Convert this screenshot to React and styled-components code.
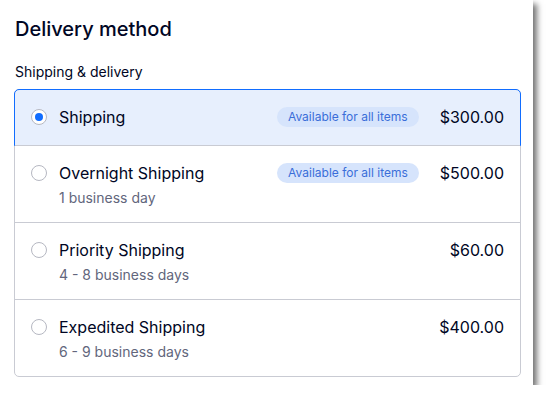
import React from 'react';
import styled, { createGlobalStyle } from 'styled-components';

const Global = createGlobalStyle`
body{
  margin:0;
  background:#fff;
  font-family:'Inter','Noto Sans',sans-serif;
}
`;

const Card = styled.div`
width:533px;
height:385px;
box-sizing:border-box;
background:#fff;
padding:17px 12px 0 14px;
box-shadow:4px 4px 6px rgba(0,0,0,0.55);
`;

const Title = styled.h1`
margin:0 0 0 1px;
font-size:20px;
font-weight:500;
line-height:24px;
color:#000624;
`;

const Label = styled.div`
margin:22px 0 8px 1px;
font-size:14px;
line-height:18px;
color:#000624;
`;

const List = styled.div`
border:1px solid #c9cbd3;
border-radius:5px;
`;

const Row = styled.div`
position:relative;
display:flex;
align-items:flex-start;
padding:16px 16px ${p => (p.$single ? '17px' : '14px')};
gap:12px;
background:${p => (p.$selected ? '#e7effd' : 'transparent')};
border-top:${p => (p.$first ? 'none' : '1px solid #c9cbd3')};
border-radius:${p => (p.$selected ? '4px 4px 0 0' : '0')};
min-height:${p => (p.$single ? '22px' : '44px')};
&::after{
  content:'';
  display:${p => (p.$selected ? 'block' : 'none')};
  position:absolute;
  inset:-1px -1px -1px -1px;
  border:1px solid #116dff;
  border-radius:5px 5px 0 0;
  pointer-events:none;
}
`;

const Radio = styled.span`
flex:none;
width:16px;
height:16px;
box-sizing:border-box;
margin-top:3px;
border-radius:50%;
border:1px solid #b6b8c2;
background:#fff;
display:flex;
align-items:center;
justify-content:center;
&::after{
  content:'';
  width:8px;
  height:8px;
  border-radius:50%;
  background:${p => (p.$checked ? '#116dff' : 'transparent')};
}
`;

const Info = styled.div`
flex:1;
display:flex;
flex-direction:column;
gap:4px;
`;

const Name = styled.div`
font-size:16px;
line-height:22px;
color:#000624;
`;

const Sub = styled.div`
font-size:14px;
line-height:20px;
color:#62667c;
`;

const Right = styled.div`
display:flex;
align-items:center;
gap:21px;
height:22px;
`;

const Badge = styled.span`
background:#d6e4fc;
color:#3a6ed9;
font-size:12px;
line-height:20px;
padding:0 11px;
border-radius:10px;
`;

const Price = styled.span`
font-size:16px;
line-height:22px;
color:#000624;
`;

const options = [
  { name: 'Shipping', badge: true, price: '$300.00', selected: true },
  { name: 'Overnight Shipping', sub: '1 business day', badge: true, price: '$500.00' },
  { name: 'Priority Shipping', sub: '4 - 8 business days', price: '$60.00' },
  { name: 'Expedited Shipping', sub: '6 - 9 business days', price: '$400.00' },
];

export default function App() {
  return (
    <>
      <Global />
      <Card>
        <Title>Delivery method</Title>
        <Label>Shipping &amp; delivery</Label>
        <List>
          {options.map((o, i) => (
            <Row key={o.name} $selected={o.selected} $single={!o.sub} $first={i === 0}>
              <Radio $checked={o.selected} />
              <Info>
                <Name>{o.name}</Name>
                {o.sub && <Sub>{o.sub}</Sub>}
              </Info>
              <Right>
                {o.badge && <Badge>Available for all items</Badge>}
                <Price>{o.price}</Price>
              </Right>
            </Row>
          ))}
        </List>
      </Card>
    </>
  );
}
